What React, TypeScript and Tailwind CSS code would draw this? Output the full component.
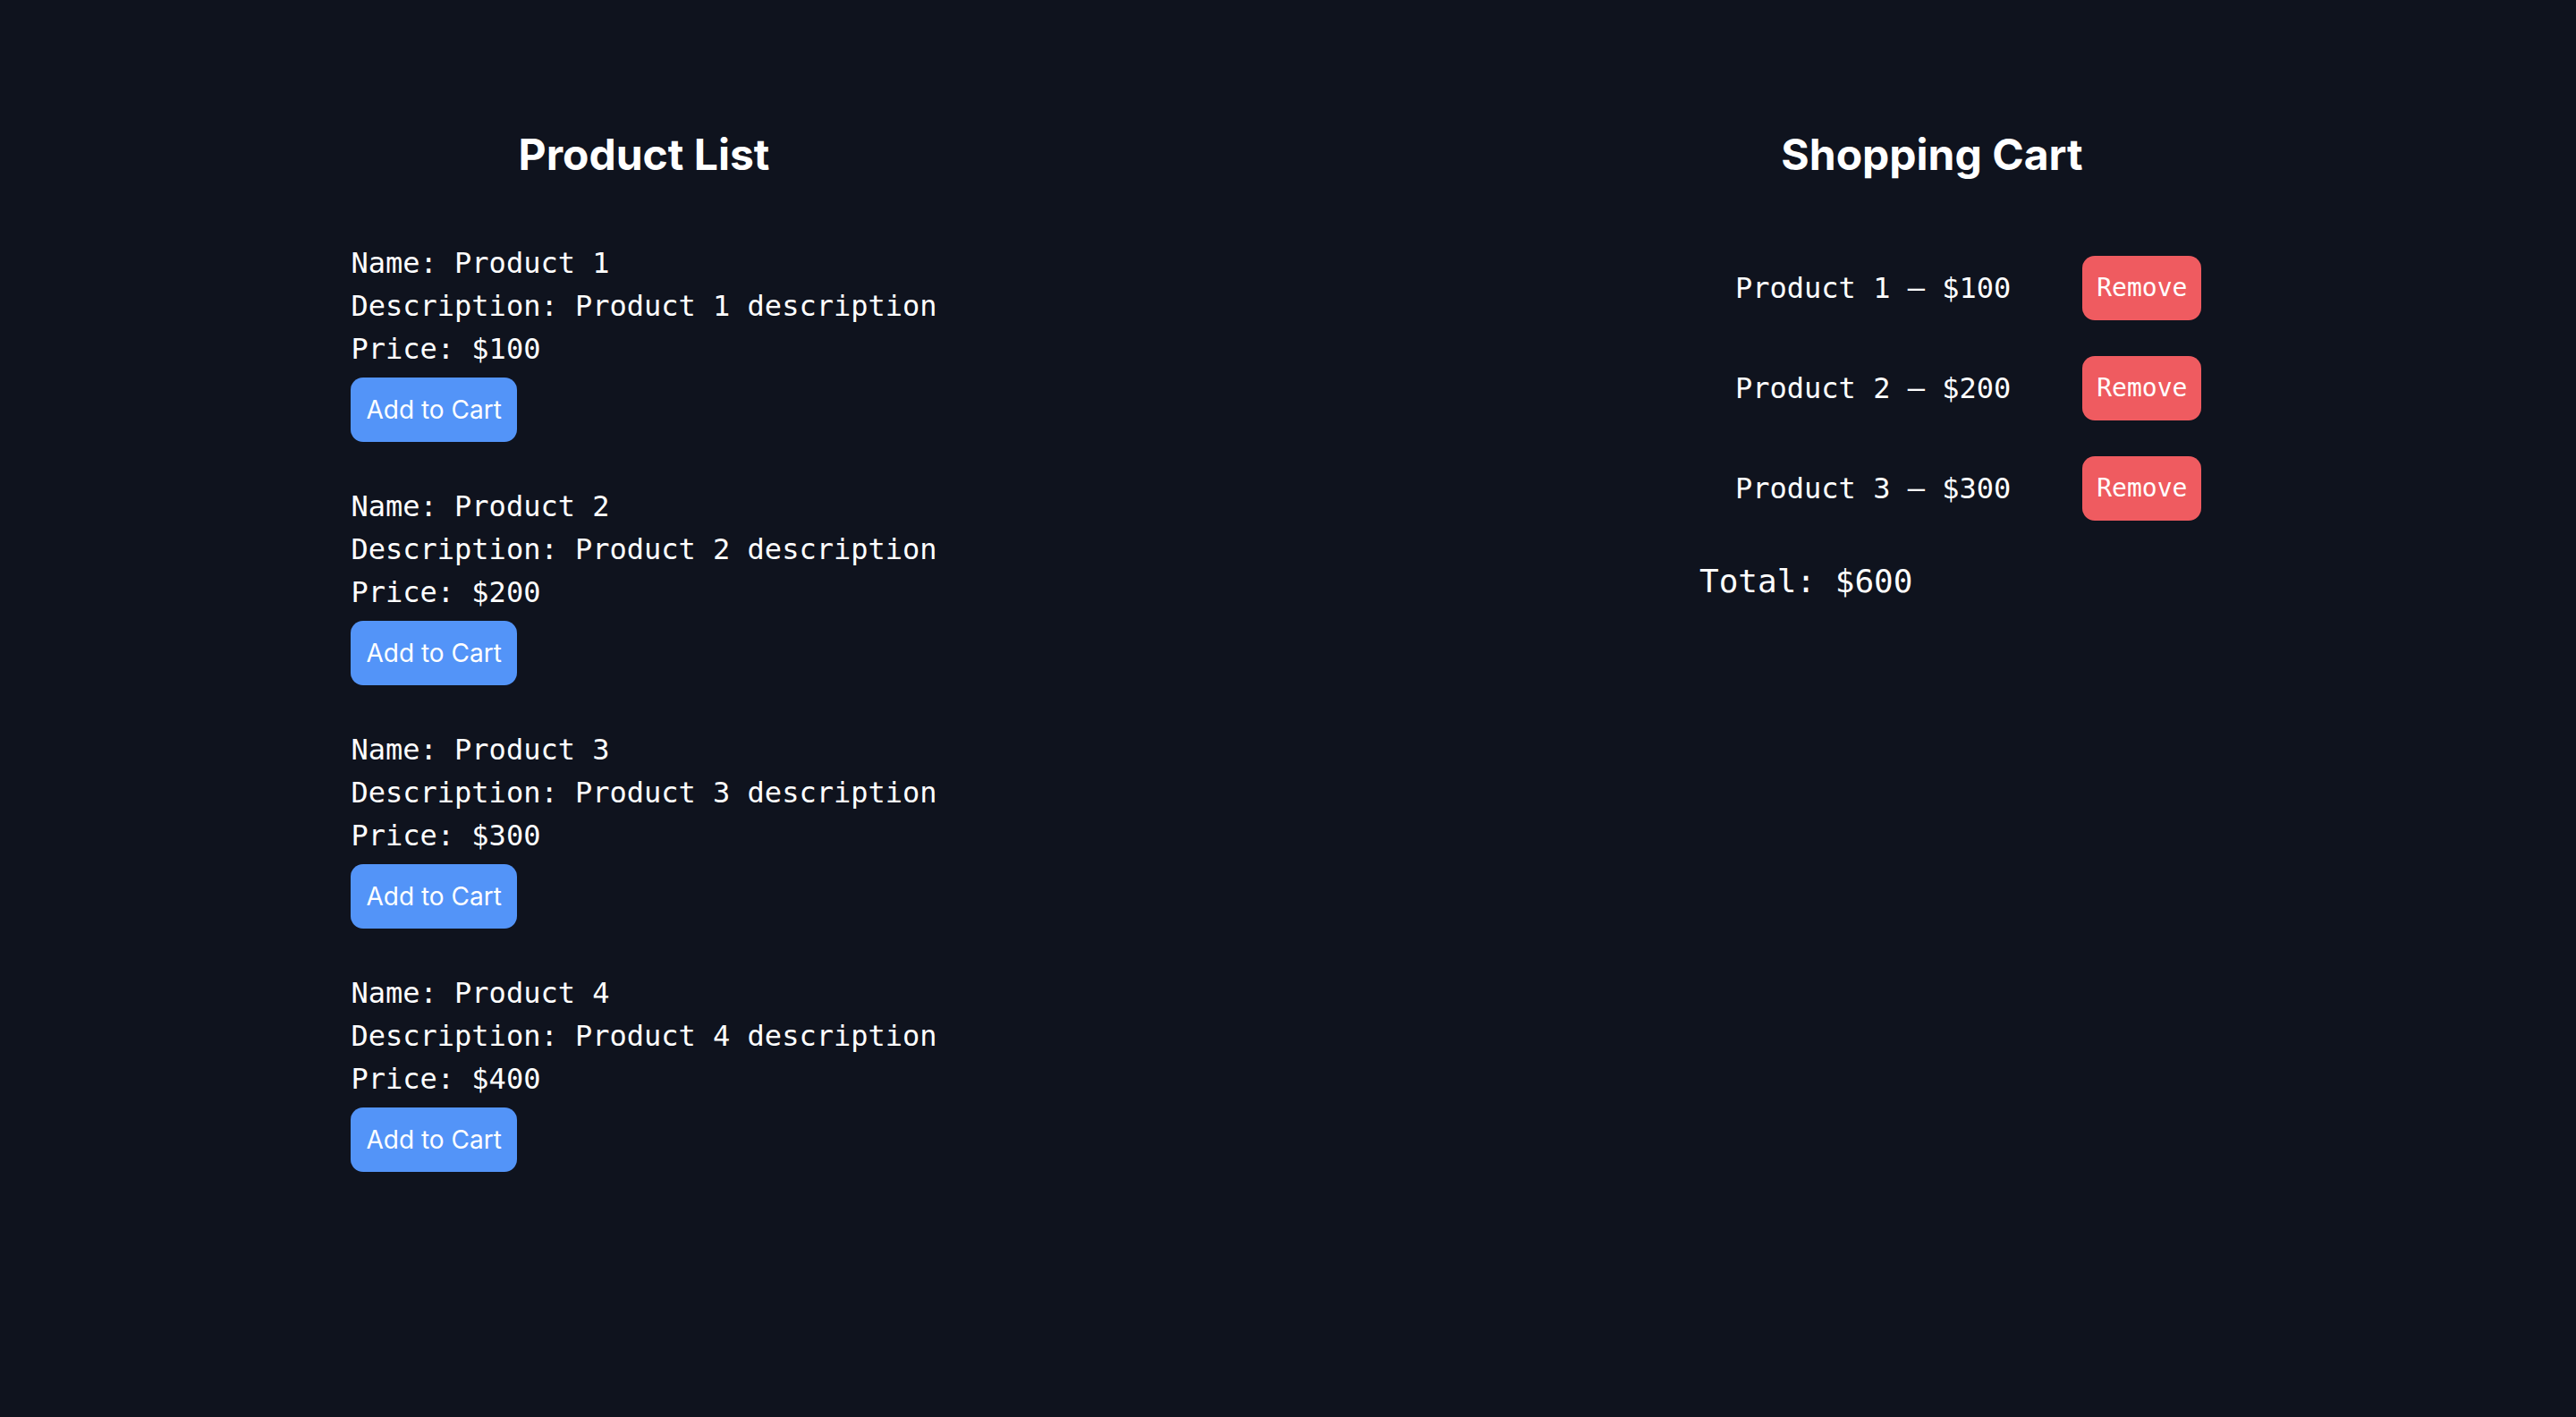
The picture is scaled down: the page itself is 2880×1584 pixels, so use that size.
import React from "react";

const products = [
  { id: 1, name: "Product 1", description: "Product 1 description", price: 100 },
  { id: 2, name: "Product 2", description: "Product 2 description", price: 200 },
  { id: 3, name: "Product 3", description: "Product 3 description", price: 300 },
  { id: 4, name: "Product 4", description: "Product 4 description", price: 400 },
];

const cart = products.slice(0, 3);

export default function App() {
  const total = cart.reduce((s, p) => s + p.price, 0);
  return (
    <div className="min-h-[1584px] w-full bg-[#0f131e] text-white flex">
      <section className="w-1/2 flex flex-col items-center pt-[141px]">
        <h2 className="font-['Inter',sans-serif] font-bold text-[48px] leading-[64px] mb-[65px]">
          Product List
        </h2>
        <ul className="flex flex-col gap-[48px] font-['DejaVu_Sans_Mono',monospace] text-[32px] leading-[48px]">
          {products.map((p) => (
            <li key={p.id} className="flex flex-col items-start">
              <p>Name: {p.name}</p>
              <p>Description: {p.description}</p>
              <p>Price: ${p.price}</p>
              <button className="mt-[8px] bg-[#5394f8] rounded-[14px] px-[17px] py-[16px] font-['Inter',sans-serif] text-[28px] leading-[40px] text-white">
                Add to Cart
              </button>
            </li>
          ))}
        </ul>
      </section>
      <section className="w-1/2 flex flex-col pt-[141px]">
        <h2 className="self-center font-['Inter',sans-serif] font-bold text-[48px] leading-[64px] mb-[81px]">
          Shopping Cart
        </h2>
        <div className="ml-[460px] flex flex-col gap-[40px] font-['DejaVu_Sans_Mono',monospace]">
          <ul className="flex flex-col gap-[40px] pl-[40px]">
            {cart.map((p) => (
              <li key={p.id} className="flex items-center">
                <span className="text-[32px] leading-[48px]">
                  {p.name} – ${p.price}
                </span>
                <button className="ml-[80px] bg-[#ef5b60] rounded-[14px] px-[16px] py-[16px] text-[28px] leading-[40px] text-white">
                  Remove
                </button>
              </li>
            ))}
          </ul>
          <p className="text-[36px] leading-[56px]">Total: ${total}</p>
        </div>
      </section>
    </div>
  );
}
